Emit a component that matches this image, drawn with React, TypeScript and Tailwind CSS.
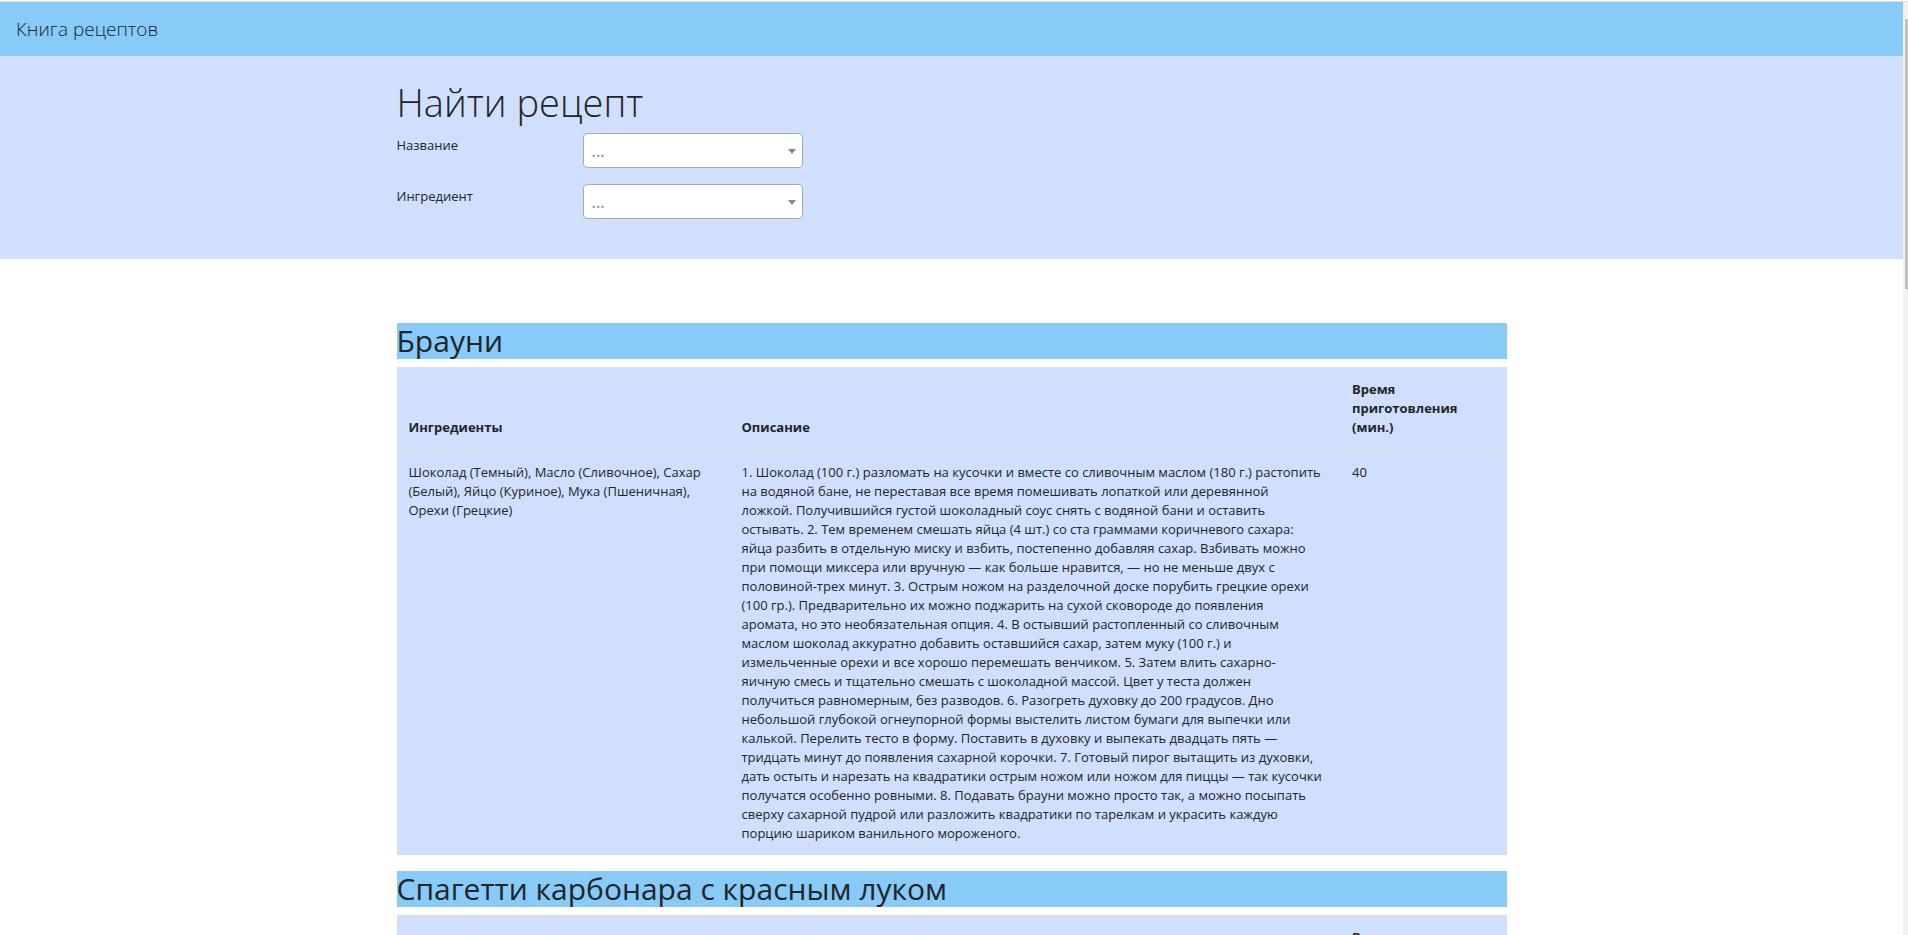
import React, { Fragment, useId } from "react";

type Recipe = {
  title: string;
  ingredients: string;
  description: string[];
  minutes: string;
};

const recipes: Recipe[] = [
  {
    title: "Брауни",
    ingredients:
      "Шоколад (Темный), Масло (Сливочное), Сахар (Белый), Яйцо (Куриное), Мука (Пшеничная), Орехи (Грецкие)",
    description: [
      "1. Шоколад (100 г.) разломать на кусочки и вместе со сливочным маслом (180 г.) растопить",
      "на водяной бане, не переставая все время помешивать лопаткой или деревянной",
      "ложкой. Получившийся густой шоколадный соус снять с водяной бани и оставить",
      "остывать. 2. Тем временем смешать яйца (4 шт.) со ста граммами коричневого сахара:",
      "яйца разбить в отдельную миску и взбить, постепенно добавляя сахар. Взбивать можно",
      "при помощи миксера или вручную — как больше нравится, — но не меньше двух с",
      "половиной-трех минут. 3. Острым ножом на разделочной доске порубить грецкие орехи",
      "(100 гр.). Предварительно их можно поджарить на сухой сковороде до появления",
      "аромата, но это необязательная опция. 4. В остывший растопленный со сливочным",
      "маслом шоколад аккуратно добавить оставшийся сахар, затем муку (100 г.) и",
      "измельченные орехи и все хорошо перемешать венчиком. 5. Затем влить сахарно-",
      "яичную смесь и тщательно смешать с шоколадной массой. Цвет у теста должен",
      "получиться равномерным, без разводов. 6. Разогреть духовку до 200 градусов. Дно",
      "небольшой глубокой огнеупорной формы выстелить листом бумаги для выпечки или",
      "калькой. Перелить тесто в форму. Поставить в духовку и выпекать двадцать пять —",
      "тридцать минут до появления сахарной корочки. 7. Готовый пирог вытащить из духовки,",
      "дать остыть и нарезать на квадратики острым ножом или ножом для пиццы — так кусочки",
      "получатся особенно ровными. 8. Подавать брауни можно просто так, а можно посыпать",
      "сверху сахарной пудрой или разложить квадратики по тарелкам и украсить каждую",
      "порцию шариком ванильного мороженого.",
    ],
    minutes: "40",
  },
  {
    title: "Спагетти карбонара с красным луком",
    ingredients: "",
    description: [],
    minutes: "",
  },
];

function FilterSelect({ label }: { label: string }) {
  const id = useId();
  return (
    <div className="mb-4 flex">
      <label htmlFor={id} className="w-[186px] shrink-0 pt-[3px]">
        {label}
      </label>
      <div className="relative w-[220px]">
        <select
          id={id}
          className="block h-[35px] w-full appearance-none rounded border border-[#aaaaaa] bg-white pl-2 pr-6 text-base font-semibold text-[#999999]"
        >
          <option>...</option>
        </select>
        <svg
          aria-hidden="true"
          viewBox="0 0 8 5"
          className="pointer-events-none absolute right-[7px] top-4 h-[5px] w-2 fill-[#888888]"
        >
          <path d="M0 0h8L4 5z" />
        </svg>
      </div>
    </div>
  );
}

function RecipeTable({ recipe }: { recipe: Recipe }) {
  return (
    <section className="mb-4">
      <h2 className="mb-2 bg-[#88caf8] text-[30px] leading-9">{recipe.title}</h2>
      <table className="w-full table-fixed border-collapse bg-[#d0dffd] text-left">
        <thead>
          <tr className="border-b-2 border-t border-b-[#dee2e6] border-t-[#dee2e6] align-bottom">
            <th scope="col" className="w-[30%] p-3 font-bold">
              Ингредиенты
            </th>
            <th scope="col" className="w-[55%] p-3 font-bold">
              Описание
            </th>
            <th scope="col" className="w-[15%] p-3 font-bold">
              Время приготовления (мин.)
            </th>
          </tr>
        </thead>
        <tbody>
          <tr className="align-top">
            <td className="p-3">{recipe.ingredients}</td>
            <td className="p-3">
              {recipe.description.map((line, index) => (
                <Fragment key={index}>
                  {index > 0 && <br />}
                  {line}
                </Fragment>
              ))}
            </td>
            <td className="p-3">{recipe.minutes}</td>
          </tr>
        </tbody>
      </table>
    </section>
  );
}

export default function App() {
  return (
    <div className="flex h-screen flex-col overflow-hidden bg-white pt-px font-['Open_Sans','Noto_Sans',sans-serif] text-[13px] leading-[19px] text-[#212529]">
      <div className="flex min-h-0 grow border-t border-[#dddddd]">
        <div className="min-w-0 grow overflow-hidden">
          <nav className="flex h-[54px] items-center bg-[#88caf8] px-4">
            <a href="#" className="text-[19px] font-light leading-7">
              Книга рецептов
            </a>
          </nav>
          <header className="bg-[#d0dffd] pb-6 pt-[23px]">
            <div className="mx-auto max-w-[1140px] px-[15px]">
              <h1 className="mb-2 text-[38px] font-light leading-[46px]">Найти рецепт</h1>
              <form>
                <FilterSelect label="Название" />
                <FilterSelect label="Ингредиент" />
              </form>
            </div>
          </header>
          <main className="mx-auto max-w-[1140px] px-[15px] pt-16">
            {recipes.map((recipe) => (
              <RecipeTable key={recipe.title} recipe={recipe} />
            ))}
          </main>
        </div>
        <div aria-hidden="true" className="w-[5px] shrink-0 bg-[#f1f1f1] pl-0.5 pt-[17px]">
          <div className="h-[270px] bg-[#c1c1c1]" />
        </div>
      </div>
    </div>
  );
}
